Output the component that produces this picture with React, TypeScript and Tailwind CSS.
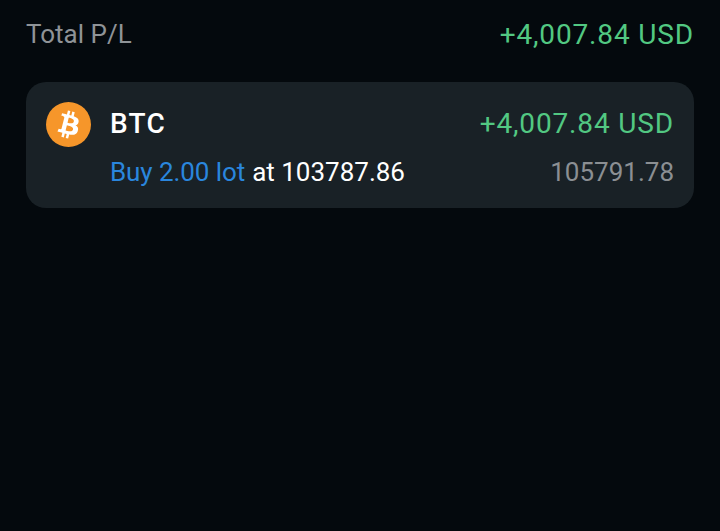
import React from 'react'

function BtcIcon() {
  return (
    <svg width="45" height="45" viewBox="0 0 32 32" className="shrink-0">
      <circle cx="16" cy="16" r="16" fill="#F6962A" />
      <path
        fill="#fff"
        d="M23.189 14.02c.314-2.096-1.283-3.223-3.465-3.975l.708-2.84-1.728-.43-.69 2.765c-.454-.114-.92-.22-1.385-.326l.695-2.783L15.596 6l-.708 2.839c-.376-.086-.746-.17-1.104-.26l.002-.009-2.384-.595-.46 1.846s1.283.294 1.256.312c.7.175.826.638.805 1.006l-.806 3.235c.048.012.11.03.18.057l-.183-.045-1.13 4.532c-.086.212-.303.531-.793.41.018.025-1.256-.313-1.256-.313l-.858 1.978 2.25.561c.418.105.828.215 1.231.318l-.715 2.872 1.727.43.708-2.84c.472.127.93.245 1.378.357l-.706 2.828 1.728.43.715-2.866c2.948.558 5.164.333 6.097-2.333.752-2.146-.037-3.385-1.588-4.192 1.13-.26 1.98-1.003 2.207-2.538zm-3.95 5.538c-.533 2.147-4.148.986-5.32.695l.95-3.805c1.172.293 4.929.872 4.37 3.11zm.535-5.569c-.487 1.953-3.495.96-4.47.717l.86-3.45c.975.243 4.118.696 3.61 2.733z"
      />
    </svg>
  )
}

export default function App() {
  return (
    <div className="h-[531px] w-[720px] overflow-hidden bg-[#04090d] px-[26px] font-['Roboto',sans-serif]">
      <div className="flex h-[82px] items-start justify-between pt-[17px] text-[26px] leading-[35px]">
        <span className="text-[#8f9397]">Total P/L</span>
        <span className="text-[28px] tracking-[0.85px] text-[#52c882]">+4,007.84 USD</span>
      </div>
      <div className="h-[126px] rounded-[20px] bg-[#192126] px-5 pt-5">
        <div className="flex h-[44px] items-center">
          <BtcIcon />
          <span className="ml-[19px] text-[28px] font-medium tracking-[1.2px] text-white">BTC</span>
          <span className="ml-auto text-[28px] tracking-[0.85px] text-[#52c882]">+4,007.84 USD</span>
        </div>
        <div className="mt-[8px] flex items-center text-[26px] leading-[36px]">
          <span className="ml-[65px] -translate-x-px tracking-[-0.08px] text-[#2a86dd]">Buy 2.00 lot</span>
          <span className="ml-[6px] text-white">at 103787.86</span>
          <span className="ml-auto text-[#8b8f93]">105791.78</span>
        </div>
      </div>
    </div>
  )
}
